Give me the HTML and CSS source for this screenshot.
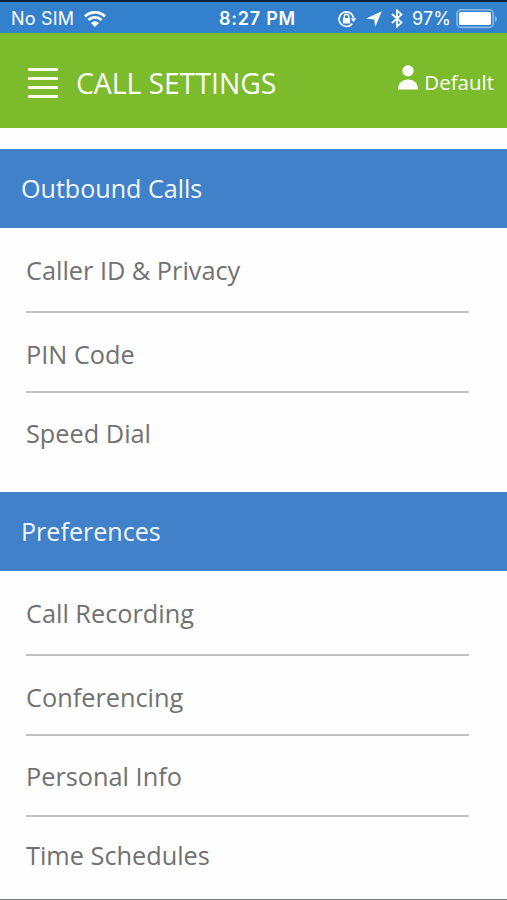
FILE: index.html
```
<!DOCTYPE html>
<html lang="en">
<head>
    <meta charset="UTF-8">
    <meta name="viewport" content="width=device-width, initial-scale=1.0">
    <title>Call Settings</title>
    <link rel="stylesheet" href="styles.css">
</head>
<body>
    <!-- Status bar -->
    <div class="status-bar">
        <div class="status-left">
            <span class="carrier">No SIM</span>
            <svg class="wifi" width="22" height="16" viewBox="0 0 22 16">
                <g fill="none" stroke="#fff" stroke-width="2.8">
                    <path d="M1 5.4a14.2 14.2 0 0 1 20 0"/>
                    <path d="M4.5 9.1a9.2 9.2 0 0 1 13 0"/>
                </g>
                <path d="M11 16l-4-4a5.6 5.6 0 0 1 8 0z" fill="#fff"/>
            </svg>
        </div>
        <span class="time">8:27 PM</span>
        <div class="status-right">
            <svg class="lock" width="19" height="18" viewBox="0 0 19 18">
                <path d="M14.3 13.5A7.3 7.3 0 1 1 15.6 8" fill="none" stroke="#fff" stroke-width="1.6"/>
                <path d="M12.8 8.2h5.4l-2.6 4z" fill="#fff"/>
                <rect x="4.9" y="8" width="7.2" height="5.4" rx=".5" fill="#fff"/>
                <path d="M6.300 8.200V6.500a2.200 2.200 0 0 1 4.400 0v1.700" fill="none" stroke="#fff" stroke-width="1.4"/>
            </svg>
            <svg class="arrow" width="16" height="16" viewBox="0 0 16 16">
                <path d="M15.800.2L9.300 15.800 8.200 8.400.2 7.600z" fill="#fff"/>
            </svg>
            <svg class="bluetooth" width="12" height="19" viewBox="0 0 12 19">
                <path d="M1 5l9.500 8.600L6 17.500v-16l4.500 3.900L1 14" fill="none" stroke="#fff" stroke-width="1.8"/>
            </svg>
            <span class="percent">97%</span>
            <svg class="battery" width="42" height="20" viewBox="0 0 42 20">
                <rect x="1" y=".8" width="36.2" height="17.6" rx="4" fill="none" stroke="#8dbbe8" stroke-width="1.6"/>
                <rect x="3" y="3" width="32" height="13" rx="1.5" fill="#fff"/>
                <path d="M39 7c2.4 1 2.4 5 0 6z" fill="#8dbbe8"/>
            </svg>
        </div>
    </div>

    <!-- Header -->
    <header class="header">
        <div class="menu-icon">
            <span></span>
            <span></span>
            <span></span>
            <span></span>
        </div>
        <h1>CALL SETTINGS</h1>
        <div class="profile">
            <svg width="20" height="25" viewBox="0 0 20 25">
                <circle cx="10" cy="5.8" r="5.6" fill="#fff"/>
                <path d="M0 24.4c0-6 4-9.800 10-9.800s10 3.800 10 9.800z" fill="#fff"/>
            </svg>
            <span>Default</span>
        </div>
    </header>

    <!-- Settings -->
    <main>
        <section>
            <h2>Outbound Calls</h2>
            <ul>
                <li>Caller ID &amp; Privacy</li>
                <li>PIN Code</li>
                <li>Speed Dial</li>
            </ul>
        </section>
        <section>
            <h2>Preferences</h2>
            <ul>
                <li>Call Recording</li>
                <li>Conferencing</li>
                <li>Personal Info</li>
                <li>Time Schedules</li>
            </ul>
        </section>
    </main>
</body>
</html>
```
FILE: styles.css
```
* {
    box-sizing: border-box;
}
body {
    margin: 0;
    height: 900px;
    overflow: hidden;
    background: #fefefe;
    border-bottom: 1px solid #77787a;
    font-family: "Open Sans", sans-serif;
    color: #717171;
}
.status-bar {
    display: grid;
    grid-template-columns: 1fr auto 1fr;
    align-items: center;
    height: 33px;
    padding: 3px 9px 0 11px;
    border-top: 2px solid #10253c;
    background: #3381cc;
    color: #fff;
    font-family: Inter, sans-serif;
    font-size: 18px;
    line-height: 28px;
}
.status-left,
.status-right {
    display: flex;
    align-items: center;
}
.status-right {
    justify-content: flex-end;
}
.carrier {
    letter-spacing: 0.2px;
}
.wifi {
    margin: -1px 0 0 10px;
}
.time {
    margin-left: 6px;
    font-weight: 600;
    letter-spacing: 0.75px;
}
.lock {
    margin-top: -1px;
}
.arrow {
    margin: -1px 0 0 9px;
}
.bluetooth {
    margin: -1px 0 0 9px;
}
.percent {
    margin: 0 5px 0 9px;
    letter-spacing: 0.1px;
}
.header {
    display: flex;
    align-items: center;
    height: 95px;
    padding: 0 13px 0 28px;
    background: #7cbb2c;
    color: #fff;
}
.menu-icon {
    display: flex;
    flex-direction: column;
    justify-content: space-between;
    width: 30px;
    height: 30px;
    margin-top: 5px;
}
.menu-icon span {
    height: 3px;
    background: #fbfff0;
}
h1 {
    margin: 4px 0 0 18px;
    font-size: 28.3px;
    font-weight: 400;
}
.profile {
    display: flex;
    align-items: center;
    margin-left: auto;
    font-size: 20.5px;
}
.profile svg {
    margin: -7px 6px 0 0;
}
.profile span {
    margin-top: 2px;
}
main {
    padding-top: 21px;
}
h2 {
    margin: 0;
    height: 79px;
    padding-left: 21px;
    background: #4181ca;
    color: #f2f8ff;
    font-size: 25.1px;
    font-weight: 400;
    line-height: 79px;
}
ul {
    margin: 0;
    padding: 0 38px 0 26px;
    list-style: none;
}
li {
    height: 81px;
    border-bottom: 2px solid #c2c2c2;
    font-size: 25.3px;
    line-height: 81px;
}
li:first-child {
    height: 85px;
    line-height: 85px;
}
li:nth-child(2) {
    height: 80px;
    line-height: 83px;
}
li:last-child {
    height: 98px;
    border-bottom: 0;
    line-height: 77px;
}
section:first-child li:last-child {
    height: 99px;
    line-height: 80px;
}
```
